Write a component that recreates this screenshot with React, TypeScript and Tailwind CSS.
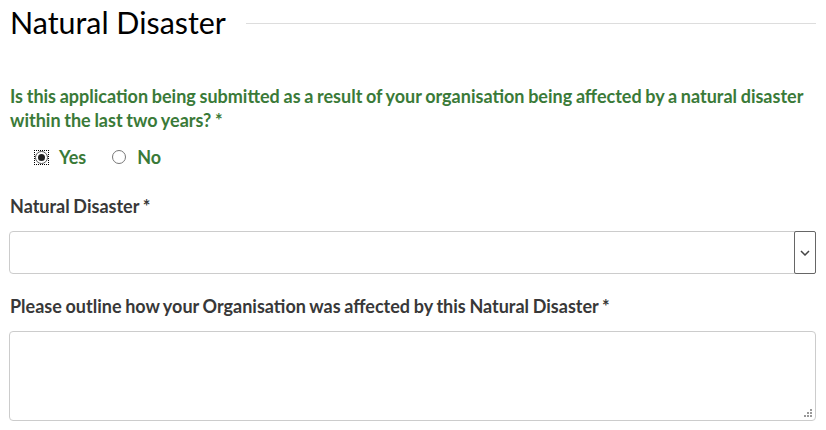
import React from "react";

export default function App() {
  return (
    <div className="w-[826px] h-[430px] bg-white overflow-hidden" style={{ fontFamily: "Lato, 'Open Sans', sans-serif" }}>
      <div className="pl-[9px] pr-[10px]">
        <div className="flex items-center pt-[2px]">
          <h2 className="text-[30.4px] leading-[40px] text-black font-normal pl-[1px]">Natural Disaster</h2>
          <div className="flex-1 ml-[20px] h-px bg-[#dddddd] mt-[2px]"></div>
        </div>
        <div className="mt-[42px] text-[18px] leading-[24px] font-bold text-[#3a7a38] pl-[1px] [word-spacing:-0.7px]">
          Is this application being submitted as a result of your organisation being affected by a natural disaster within the last two years? *
        </div>
        <div className="flex items-center mt-[13px] pl-[25px] text-[18px] font-bold text-[#3a7a38] h-[24px]">
          <span className="w-[15px] h-[15px] border border-dotted border-black flex items-center justify-center">
            <span className="w-[13px] h-[13px] rounded-full border border-[#555] flex items-center justify-center">
              <span className="w-[7px] h-[7px] rounded-full bg-[#222]"></span>
            </span>
          </span>
          <span className="ml-[10px]">Yes</span>
          <span className="ml-[26px] w-[14px] h-[14px] rounded-full border border-[#777]"></span>
          <span className="ml-[11px]">No</span>
        </div>
        <div className="mt-[25px] text-[18px] leading-[24px] font-bold text-[#383838] pl-[1px] [word-spacing:-0.7px]">Natural Disaster *</div>
        <div className="mt-[13px] h-[43px] border border-[#cccccc] rounded-[4px] flex justify-end items-stretch">
          <div className="w-[22px] border border-[#666] bg-white flex items-center justify-center rounded-[2px] -mr-px -my-px">
            <svg width="10" height="6" viewBox="0 0 10 6"><path d="M1 1 L5 5 L9 1" stroke="#444" strokeWidth="1.5" fill="none" /></svg>
          </div>
        </div>
        <div className="mt-[20px] text-[18px] leading-[24px] font-bold text-[#383838] pl-[1px] [word-spacing:-0.7px]">Please outline how your Organisation was affected by this Natural Disaster *</div>
        <div className="mt-[13px] h-[90px] border border-[#cccccc] rounded-[4px] relative">
          <svg className="absolute right-[2px] bottom-[2px]" width="10" height="10" viewBox="0 0 10 10">
            <g fill="#999">
              <rect x="7" y="1" width="2" height="2" />
              <rect x="4" y="4" width="2" height="2" />
              <rect x="7" y="4" width="2" height="2" />
              <rect x="1" y="7" width="2" height="2" />
              <rect x="4" y="7" width="2" height="2" />
              <rect x="7" y="7" width="2" height="2" />
            </g>
          </svg>
        </div>
      </div>
    </div>
  );
}
